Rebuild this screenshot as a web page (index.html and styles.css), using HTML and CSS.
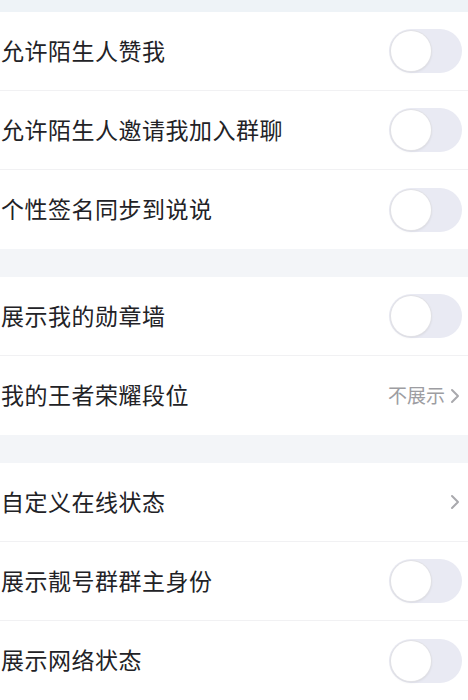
FILE: index.html
```html
<!DOCTYPE html>
<html lang="zh">
<head>
<meta charset="utf-8">
<link rel="stylesheet" href="styles.css">
</head>
<body>
<div class="page">
  <div class="gap top"></div>
  <div class="group">
    <div class="row"><span class="label">允许陌生人赞我</span><span class="toggle"><span class="knob"></span></span></div>
    <div class="row"><span class="label">允许陌生人邀请我加入群聊</span><span class="toggle"><span class="knob"></span></span></div>
    <div class="row"><span class="label">个性签名同步到说说</span><span class="toggle"><span class="knob"></span></span></div>
  </div>
  <div class="gap"></div>
  <div class="group">
    <div class="row"><span class="label">展示我的勋章墙</span><span class="toggle"><span class="knob"></span></span></div>
    <div class="row"><span class="label">我的王者荣耀段位</span><span class="right"><span class="value">不展示</span><svg class="chev" viewBox="0 0 10 16" width="10" height="16"><path d="M2 2 L8 8 L2 14" fill="none" stroke="#a9a9ad" stroke-width="2" stroke-linecap="round" stroke-linejoin="round"/></svg></span></div>
  </div>
  <div class="gap"></div>
  <div class="group">
    <div class="row"><span class="label">自定义在线状态</span><span class="right"><svg class="chev" viewBox="0 0 10 16" width="10" height="16"><path d="M2 2 L8 8 L2 14" fill="none" stroke="#a9a9ad" stroke-width="2" stroke-linecap="round" stroke-linejoin="round"/></svg></span></div>
    <div class="row"><span class="label">展示靓号群群主身份</span><span class="toggle"><span class="knob"></span></span></div>
    <div class="row"><span class="label">展示网络状态</span><span class="toggle"><span class="knob"></span></span></div>
  </div>
</div>
</body>
</html>
```
FILE: styles.css
```css
html, body {
  margin: 0;
  padding: 0;
  background: #ffffff;
}
.page {
  width: 468px;
  height: 700px;
  overflow: hidden;
  font-family: "Noto Sans CJK SC", "Noto Sans", sans-serif;
}
.gap {
  height: 28px;
  background: #f3f5f8;
}
.gap.top {
  height: 12px;
  background: #eef3f7;
}
.group {
  background: #ffffff;
}
.row {
  height: 78px;
  border-bottom: 1px solid #f1f1f3;
  display: flex;
  align-items: center;
  justify-content: space-between;
  padding: 0 6px 0 1px;
}
.group .row:last-child {
  border-bottom: none;
  height: 79px;
}
.label {
  font-size: 23px;
  line-height: 30px;
  color: #222226;
  letter-spacing: 0.5px;
  padding-bottom: 3px;
}
.toggle {
  width: 73px;
  height: 44px;
  border-radius: 22px;
  background: #e9eaf3;
  display: flex;
  align-items: center;
  padding-left: 2px;
  box-sizing: border-box;
}
.knob {
  width: 40px;
  height: 40px;
  border-radius: 50%;
  background: #ffffff;
  box-shadow: 0 0 0 1px #e2e2e6, 0 1px 3px rgba(0,0,0,0.12);
}
.right {
  display: flex;
  align-items: center;
  gap: 5px;
  padding-right: 2px;
}
.value {
  font-size: 19px;
  line-height: 24px;
  color: #9d9da2;
  padding-bottom: 2px;
}
.chev {
  display: block;
}
```
